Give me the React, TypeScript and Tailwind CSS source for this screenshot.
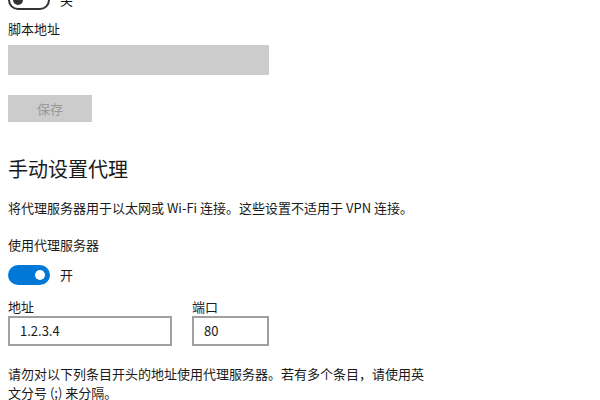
import React from 'react';

const font = { fontFamily: '"Noto Sans CJK SC", "Noto Sans", sans-serif' };

function Toggle({ on }: { on: boolean }) {
  return on ? (
    <span className="relative inline-block h-[20px] w-[42px] rounded-full bg-[#0078d7]">
      <span className="absolute right-[5px] top-[5px] h-[10px] w-[10px] rounded-full bg-white" />
    </span>
  ) : (
    <span className="relative inline-block h-[20px] w-[42px] rounded-full border-2 border-[#333]">
      <span className="absolute left-[3px] top-[3px] h-[10px] w-[10px] rounded-full bg-[#333]" />
    </span>
  );
}

export default function App() {
  return (
    <div className="h-[400px] w-[600px] overflow-hidden bg-white text-[#1a1a1a]" style={font}>
      <div className="flex flex-col pl-[8px]">
        {/* 脚本地址 */}
        <div className="-mt-[10px] flex items-center gap-[10px]">
          <Toggle on={false} />
          <span className="text-[13px]">关</span>
        </div>
        <label className="mt-[10px] text-[13px] leading-[18px]">脚本地址</label>
        <div className="mt-[7px] h-[30px] w-[261px] bg-[#cccccc]" />
        <button className="mt-[20px] h-[27px] w-[84px] bg-[#cccccc] text-[13px] text-[#999]">保存</button>

        {/* 手动设置代理 */}
        <h2 className="mt-[34px] text-[20px] leading-[26px]">手动设置代理</h2>
        <p className="mt-[16px] text-[13px] leading-[20px]">
          将代理服务器用于以太网或 Wi-Fi 连接。这些设置不适用于 VPN 连接。
        </p>
        <label className="mt-[18px] text-[13px] leading-[18px]">使用代理服务器</label>
        <div className="mt-[11px] flex items-center gap-[10px]">
          <Toggle on />
          <span className="text-[13px]">开</span>
        </div>

        <div className="mt-[14px] flex gap-[20px]">
          <div className="flex flex-col">
            <label className="text-[13px] leading-[16px]">地址</label>
            <div className="mt-[1px] flex h-[30px] w-[164px] items-center border-2 border-[#a0a0a0] px-[10px] text-[13px]">
              1.2.3.4
            </div>
          </div>
          <div className="flex flex-col">
            <label className="text-[13px] leading-[16px]">端口</label>
            <div className="mt-[1px] flex h-[30px] w-[77px] items-center border-2 border-[#a0a0a0] px-[10px] text-[13px]">
              80
            </div>
          </div>
        </div>

        <p className="mt-[18px] w-[428px] text-[13px] leading-[19px]">
          请勿对以下列条目开头的地址使用代理服务器。若有多个条目，请使用英文分号 (;) 来分隔。
        </p>
      </div>
    </div>
  );
}
